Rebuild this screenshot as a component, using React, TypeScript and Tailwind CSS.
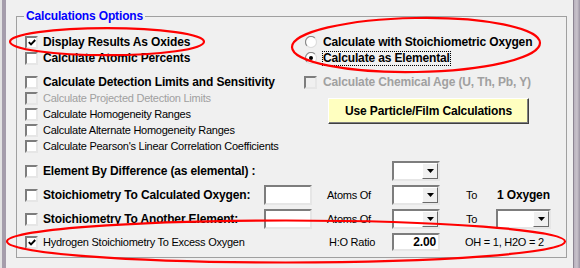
import React from "react";

const sunken =
  "border-2 border-t-[#7d7d7d] border-l-[#7d7d7d] border-r-[#e6e6e6] border-b-[#e6e6e6]";

function CheckBox({ checked, disabled }: { checked?: boolean; disabled?: boolean }) {
  return (
    <span
      className={`flex h-[13px] w-[13px] shrink-0 items-center justify-center ${sunken} ${
        disabled ? "bg-[#f0f0f0]" : "bg-white"
      }`}
    >
      {checked && (
        <svg width="8" height="7" viewBox="0 0 8 7">
          <path d="M0.8 3.2 L3 5.4 L7.2 1" stroke="#000" strokeWidth="1.9" fill="none" />
        </svg>
      )}
    </span>
  );
}

function Radio({ checked }: { checked?: boolean }) {
  return (
    <svg width="12" height="12" viewBox="0 0 12 12" className="shrink-0">
      <circle cx="6" cy="6" r="5.5" fill="#fff" />
      <path d="M9.9 2.1 A5.5 5.5 0 0 0 2.1 9.9" stroke="#8a8a8a" strokeWidth="1.2" fill="none" />
      <path d="M9.9 2.1 A5.5 5.5 0 0 1 2.1 9.9" stroke="#dedede" strokeWidth="1.2" fill="none" />
      {checked && <circle cx="6" cy="6" r="2" fill="#000" />}
    </svg>
  );
}

function Combo({ className = "w-[48px]" }: { className?: string }) {
  return (
    <div className={`flex h-[20px] justify-end bg-white ${sunken} ${className}`}>
      <div className="flex w-[16px] items-center justify-center border border-t-white border-l-white border-r-[#6a6a6a] border-b-[#6a6a6a] bg-[#f0f0f0]">
        <svg width="7" height="4" viewBox="0 0 7 4">
          <path d="M0 0 H7 L3.5 4 Z" fill="#000" />
        </svg>
      </div>
    </div>
  );
}

function TextBox() {
  return <div className={`h-[20px] w-[48px] bg-white ${sunken}`} />;
}

function Item({
  children,
  bold,
  disabled,
  checked,
}: {
  children: React.ReactNode;
  bold?: boolean;
  disabled?: boolean;
  checked?: boolean;
}) {
  return (
    <div className="flex h-[16px] items-center gap-[5px]">
      <CheckBox checked={checked} disabled={disabled} />
      <span
        className={`whitespace-nowrap leading-[14px] ${
          bold ? "text-[12px] font-bold tracking-[-0.15px]" : "text-[11px] tracking-[-0.25px]"
        } ${disabled ? "text-[#a0a0a0]" : ""}`}
      >
        {children}
      </span>
    </div>
  );
}

const bold = "whitespace-nowrap text-[12px] font-bold tracking-[-0.15px]";
const normal = "whitespace-nowrap text-[11px] tracking-[-0.25px]";

export default function App() {
  return (
    <div className="relative flex h-[268px] w-[580px] overflow-hidden bg-[#f0f0f0] font-['Liberation_Sans',Arial,sans-serif] text-black">
      <div className="w-[6px] shrink-0 border-l-2 border-[#e2e2e2] bg-[#a59dab]" />

      <div className="flex-1 pl-[10px] pr-[6px] pt-[9px]">
        <fieldset className="h-[249px] border border-[#a0a0a0]">
          <legend className="ml-[7px] h-[14px] px-[2px] text-[12px] font-bold leading-[14px] tracking-[-0.15px] text-[#0000ff]">
            Calculations Options
          </legend>

          <div className="pl-[8px] pt-[11px]">
            <div className="flex">
              <div className="w-[279px] shrink-0">
                <Item bold checked>Display Results As Oxides</Item>
                <Item bold>Calculate Atomic Percents</Item>
                <div className="mt-[8px]">
                  <Item bold>Calculate Detection Limits and Sensitivity</Item>
                  <Item disabled>Calculate Projected Detection Limits</Item>
                  <Item>Calculate Homogeneity Ranges</Item>
                  <Item>Calculate Alternate Homogeneity Ranges</Item>
                  <Item>Calculate Pearson's Linear Correlation Coefficients</Item>
                </div>
              </div>

              <div className="flex-1">
                <div className="flex h-[16px] items-center gap-[6px] pl-[1px]">
                  <Radio />
                  <span className={`${bold} leading-[14px]`}>Calculate with Stoichiometric Oxygen</span>
                </div>
                <div className="flex h-[16px] items-center gap-[5px] pl-[1px]">
                  <Radio checked />
                  <span className={`${bold} border border-dotted border-black leading-[13px]`}>
                    Calculate as Elemental
                  </span>
                </div>
                <div className="mt-[8px] flex h-[16px] items-center gap-[6px]">
                  <CheckBox disabled />
                  <span className={`${bold} leading-[14px] text-[#a0a0a0]`}>
                    Calculate Chemical Age (U, Th, Pb, Y)
                  </span>
                </div>
                <button className="ml-[24px] mt-[8px] flex h-[26px] w-[201px] items-center justify-center border border-t-white border-l-white border-r-[#404040] border-b-[#404040] bg-[#ffffc0] shadow-[inset_-1px_-1px_0_#808080]">
                  <span className={bold}>Use Particle/Film Calculations</span>
                </button>
              </div>
            </div>

            <div className="mt-[5px] grid grid-cols-[239px_63px_65px_74px_31px_1fr] items-center">
              <div className="flex h-[24px] items-center gap-[5px]">
                <CheckBox />
                <span className={bold}>Element By Difference (as elemental) :</span>
              </div>
              <div />
              <div />
              <Combo />
              <div />
              <div />

              <div className="flex h-[24px] items-center gap-[5px]">
                <CheckBox />
                <span className={bold}>Stoichiometry To Calculated Oxygen:</span>
              </div>
              <TextBox />
              <span className={normal}>Atoms Of</span>
              <Combo />
              <span className={normal}>To</span>
              <span className={bold}>1 Oxygen</span>

              <div className="flex h-[24px] items-center gap-[5px]">
                <CheckBox />
                <span className={bold}>Stoichiometry To Another Element:</span>
              </div>
              <TextBox />
              <span className={normal}>Atoms Of</span>
              <Combo />
              <span className={normal}>To</span>
              <Combo className="-ml-[1px] w-[55px]" />

              <div className="flex h-[22px] items-center gap-[5px]">
                <CheckBox checked />
                <span className={normal}>Hydrogen Stoichiometry To Excess Oxygen</span>
              </div>
              <div />
              <span className={`${normal} pl-[2px]`}>H:O Ratio</span>
              <div className={`flex h-[18px] w-[48px] items-center justify-end bg-white pr-[2px] ${sunken}`}>
                <span className={bold}>2.00</span>
              </div>
              <span className={`${normal} col-span-2 -ml-[1px]`}>OH = 1, H2O = 2</span>
            </div>
          </div>
        </fieldset>
      </div>

      <div className="w-[7px] shrink-0 border-l border-[#8d8593] bg-linear-to-r from-[#b9b2be] via-[#c9c3cc] to-[#9c94a3]" />

      <svg
        className="pointer-events-none absolute left-0 top-0"
        width="580"
        height="268"
        viewBox="0 0 580 268"
        fill="none"
      >
        <ellipse cx="107" cy="41.7" rx="97" ry="13.5" stroke="#ff0000" strokeWidth="2.2" />
        <ellipse cx="416" cy="45" rx="124" ry="27" stroke="#ff0000" strokeWidth="2.2" transform="rotate(-1 416 45)" />
        <ellipse cx="286" cy="241.5" rx="279" ry="21" stroke="#ff0000" strokeWidth="2.2" />
      </svg>
    </div>
  );
}
